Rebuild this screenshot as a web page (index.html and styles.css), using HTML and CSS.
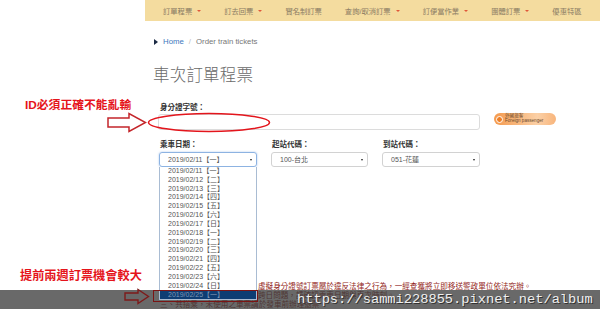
FILE: index.html
```html
<!DOCTYPE html>
<html lang="zh-Hant">
<head>
    <meta charset="UTF-8">
    <title>車次訂單程票</title>
    <link rel="stylesheet" href="styles.css">
</head>
<body>

    <!-- 上方選單 -->
    <div class="topnav">
        <span class="nav-item">訂單程票<i class="caret"></i></span>
        <span class="nav-item">訂去回票<i class="caret"></i></span>
        <span class="nav-item">實名制訂票</span>
        <span class="nav-item">查詢/取消訂票<i class="caret"></i></span>
        <span class="nav-item">訂便當作業<i class="caret"></i></span>
        <span class="nav-item">團體訂票<i class="caret"></i></span>
        <span class="nav-item">優惠特區</span>
    </div>

    <div class="content">
        <div class="crumbs"><i class="crumb-arrow"></i><a class="crumb-link">Home</a><span class="crumb-sep">/</span>Order train tickets</div>
        <h1 class="title">車次訂單程票</h1>

        <div class="field-label id-label">身分證字號：</div>
        <div class="id-row">
            <div class="text-input"></div>
            <div class="foreign-btn">
                <span class="foreign-icon"></span>
                <span class="foreign-text"><b>外國旅客</b><span>Foreign passenger</span></span>
            </div>
        </div>

        <div class="select-row">
            <div class="select-col">
                <div class="field-label">乘車日期：</div>
                <div class="fake-select is-open">2019/02/11【一】<i class="sel-caret"></i></div>
                <ul class="date-list">
                    <li>2019/02/11【一】</li>
                    <li>2019/02/12【二】</li>
                    <li>2019/02/13【三】</li>
                    <li>2019/02/14【四】</li>
                    <li>2019/02/15【五】</li>
                    <li>2019/02/16【六】</li>
                    <li>2019/02/17【日】</li>
                    <li>2019/02/18【一】</li>
                    <li>2019/02/19【二】</li>
                    <li>2019/02/20【三】</li>
                    <li>2019/02/21【四】</li>
                    <li>2019/02/22【五】</li>
                    <li>2019/02/23【六】</li>
                    <li>2019/02/24【日】</li>
                    <li class="picked">2019/02/25【一】</li>
                </ul>
            </div>
            <div class="select-col">
                <div class="field-label">起站代碼：</div>
                <div class="fake-select">100-台北<i class="sel-caret"></i></div>
            </div>
            <div class="select-col">
                <div class="field-label">到站代碼：</div>
                <div class="fake-select">051-花蓮<i class="sel-caret"></i></div>
            </div>
        </div>

        <!-- 左半部被下拉選單蓋住 -->
        <div class="notes">
            <p class="behind-list">虛擬身分證號訂票屬於違反法律之行為，一經查獲將立即移送警政單位依法究辦。</p>
            <p class="behind-list">跨日問題，請確認乘車日期與車次時刻。</p>
            <p>三、共搭乘，未使用之車票請於發車前辦理退票。</p>
        </div>
    </div>

    <!-- 標註 (蓋在畫面上) -->
    <div class="note-red note-id">ID必須正確不能亂輸</div>
    <svg class="mark-arrow arrow-one" width="40" height="21" viewBox="0 0 40 21">
        <polygon points="1,6 22,6 22,1.5 38.5,10.5 22,19.5 22,15 1,15" fill="none" stroke="#c4262b" stroke-width="1.5"/>
    </svg>
    <svg class="mark-ellipse" width="124" height="21" viewBox="0 0 124 21">
        <ellipse cx="62" cy="10.5" rx="60.5" ry="9" fill="none" stroke="#e3151c" stroke-width="1.5"/>
    </svg>
    <div class="note-red note-early">提前兩週訂票機會較大</div>

    <div class="watermark">https://sammi228855.pixnet.net/album</div>

    <svg class="mark-arrow arrow-two" width="26" height="17" viewBox="0 0 26 17">
        <polygon points="1,5 14,5 14,1.5 24.5,8.5 14,15.5 14,12 1,12" fill="none" stroke="#7d1a1a" stroke-width="1.4"/>
    </svg>
    <div class="mark-box"></div>

</body>
</html>
```

FILE: styles.css
```css
html, body {
  margin: 0; padding: 0; height: 100%; overflow: hidden; background: #fff;
  font-family: "Liberation Sans", "Noto Sans CJK TC", sans-serif; color: #333;
}

/* 上方選單 */
.topnav { margin-left: 145px; height: 21px; background: #f4dc9f; display: flex; align-items: center; padding-left: 18px; gap: 23px; font-size: 7.3px; color: #8a7b63; }
.nav-item { display: flex; align-items: center; white-space: nowrap; }
.caret { display: inline-block; margin-left: 5px; border-top: 2.5px solid #e0583a; border-left: 2px solid transparent; border-right: 2px solid transparent; }

.content { padding-left: 153px; position: relative; }

.crumbs { margin-top: 16px; height: 9px; line-height: 9px; font-size: 7.8px; color: #777; display: flex; align-items: center; }
.crumb-arrow { display: inline-block; border-left: 4px solid #1b2a44; border-top: 3.5px solid transparent; border-bottom: 3.5px solid transparent; margin: 0 5px 0 1px; }
.crumb-link { color: #3d78bd; }
.crumb-sep { color: #bbb; margin: 0 5px; }

.title { margin: 19px 0 0 0; font-size: 16.5px; line-height: 20px; font-weight: 300; color: #6a6a6a; letter-spacing: 0.2px; }

.field-label { font-size: 7.5px; line-height: 9px; font-weight: bold; color: #333; }
.id-label { margin: 18px 0 0 7px; }

.id-row { display: flex; align-items: flex-start; margin: 2px 0 0 5px; }
.text-input { width: 320px; height: 14px; border: 1px solid #dcdcdc; border-radius: 3px; background: #fff; }

.foreign-btn { margin: -1px 0 0 14px; width: 62px; height: 12px; border-radius: 6px; background: linear-gradient(to right, #f49a4e, #fbd0a6 70%, #f8b57c); display: flex; align-items: center; }
.foreign-icon { width: 7px; height: 7px; margin-left: 2px; border-radius: 50%; border: 1.2px solid #fff; background: #ef7f25; box-sizing: border-box; }
.foreign-text { margin-left: 2px; display: flex; flex-direction: column; font-size: 4.6px; line-height: 4.8px; color: #6b4a2c; white-space: nowrap; }
.foreign-text b { font-weight: normal; }

.select-row { display: grid; grid-template-columns: 98px 97px 98px; column-gap: 14px; margin: 10px 0 0 6px; }
.select-col { position: relative; }
.select-col .field-label { padding-left: 1px; }
.fake-select { margin-top: 3px; height: 13px; line-height: 13px; border: 1px solid #d2d2d2; border-radius: 3px; font-size: 7px; color: #555; padding-left: 8px; position: relative; white-space: nowrap; }
.fake-select.is-open { border-color: #8db3e2; box-shadow: 0 0 2px rgba(102,155,220,0.6); }
.sel-caret { position: absolute; right: 4px; top: 6px; border-top: 2px solid #222; border-left: 1.5px solid transparent; border-right: 1.5px solid transparent; }

.date-list { position: absolute; left: 0; top: 27px; width: 96px; margin: 0; padding: 0; list-style: none; background: #fff; border: 1px solid #a9bcd3; border-top: none; z-index: 25; }
.date-list li { height: 8.84px; line-height: 8.84px; font-size: 7px; color: #555; padding-left: 8px; white-space: nowrap; }
.date-list li.picked { background: #0e3d73; color: #7f96b4; }

.notes { margin: 115px 0 0 7px; font-size: 7.6px; line-height: 9px; color: #931f22; }
.notes p { margin: 0; white-space: nowrap; }
.notes .behind-list { padding-left: 98px; }

/* 標註 */
.note-red { position: absolute; color: #e5141b; font-weight: bold; font-size: 12.2px; line-height: 13px; white-space: nowrap; }
.note-id { left: 25px; top: 99px; font-size: 11.8px; }
.note-early { left: 20px; top: 270px; }
.mark-arrow { position: absolute; z-index: 40; }
.arrow-one { left: 107px; top: 112px; }
.arrow-two { left: 124px; top: 288px; }
.mark-ellipse { position: absolute; left: 147px; top: 112px; }
.mark-box { position: absolute; left: 153px; top: 290px; width: 103px; height: 10px; border: 1.5px solid #7a1414; z-index: 40; }

.watermark { position: absolute; left: 0; right: 0; top: 290px; height: 19px; background: rgba(58,58,58,0.76); z-index: 20; font-family: "Liberation Mono", monospace; font-size: 13.7px; line-height: 19px; color: #efefef; text-shadow: 1px 1px 0 #333; padding-left: 297px; box-sizing: border-box; white-space: nowrap; }
```
